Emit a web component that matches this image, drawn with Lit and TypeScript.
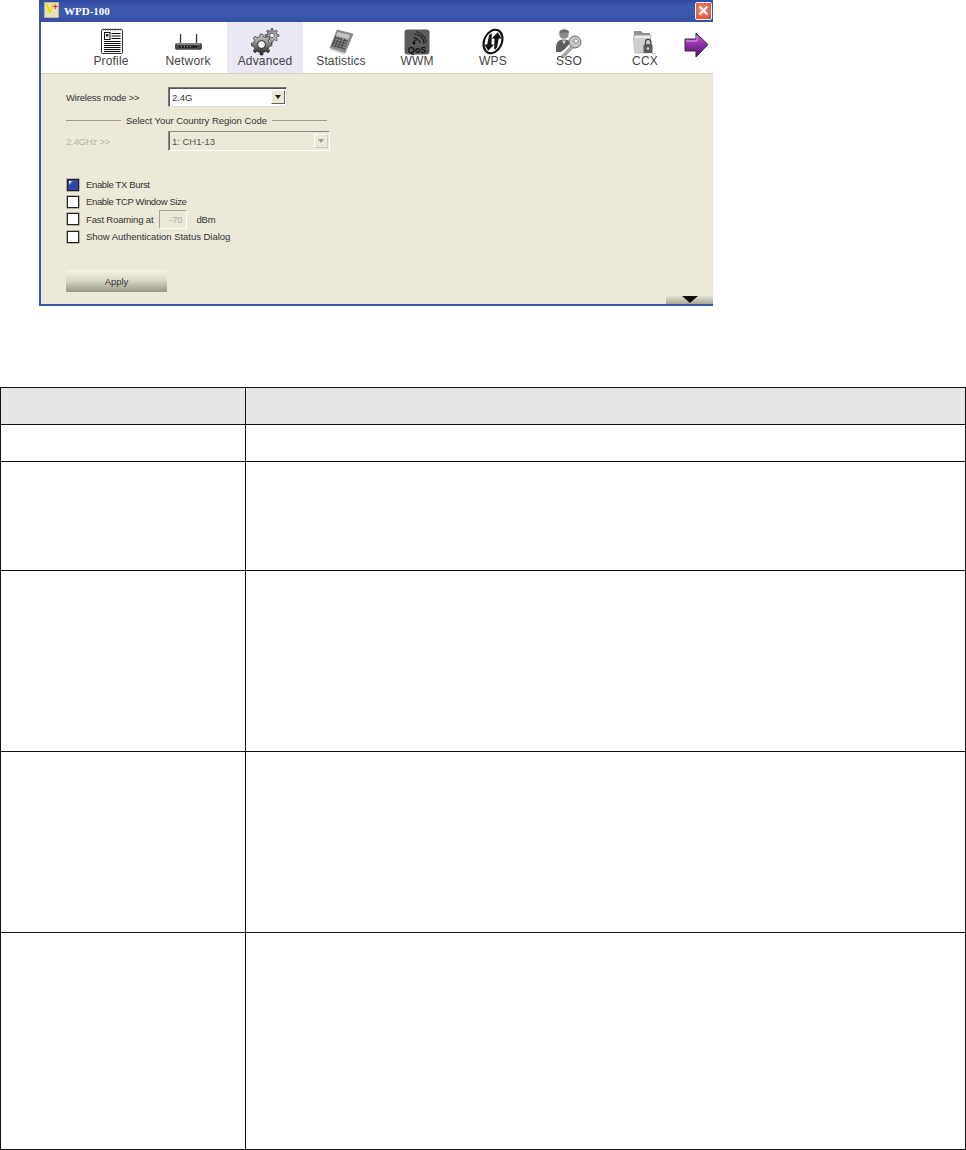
import { LitElement, html, css, svg } from "lit";
import { customElement } from "lit/decorators.js";

function gear(cx: number, cy: number, rOut: number, rIn: number, teeth: number): string {
  const pts: string[] = [];
  const step = (Math.PI * 2) / teeth;
  for (let i = 0; i < teeth; i++) {
    const a = i * step;
    const corners: [number, number][] = [
      [rIn, a - step * 0.5],
      [rIn, a - step * 0.27],
      [rOut, a - step * 0.15],
      [rOut, a + step * 0.15],
      [rIn, a + step * 0.27],
    ];
    for (const [r, t] of corners) {
      pts.push(`${(cx + r * Math.cos(t)).toFixed(2)} ${(cy + r * Math.sin(t)).toFixed(2)}`);
    }
  }
  return "M" + pts.join("L") + "Z";
}

const icons: Record<string, unknown> = {
  profile: svg`<svg class="ic" width="24" height="27" viewBox="0 0 24 27" style="margin-top:6px">
    <rect x="2.500" y="1.500" width="21" height="24" rx="1" fill="#f6f6f6" stroke="#333" stroke-width="1"/>
    <path d="M4 .5v2M6.500 .5v2M9 .5v2M11.500 .5v2M14 .5v2M16.500 .5v2M19 .5v2M21.500 .5v2" stroke="#555" stroke-width="1"/>
    <rect x="5.500" y="4.500" width="5.500" height="7" fill="#fff" stroke="#111" stroke-width="1"/>
    <path d="M7 6h2.500v2.500H7z" fill="#222"/>
    <path d="M12.500 5.500h9M12.500 8h9M12.500 10.500h9M5 13.500h16.500M5 15.500h16.500M5 17.500h16.500M5 19.500h16.500M5 21.500h16.500M5 23.500h16.500" stroke="#111" stroke-width="1"/>
  </svg>`,
  network: svg`<svg class="ic" width="28" height="18" viewBox="0 0 28 18" style="margin-top:12px">
    <path d="M6.500 0v10M22.500 0v10" stroke="#333" stroke-width="1.300"/>
    <rect x="1" y="9" width="27" height="7" rx="2" fill="#4a4a4a"/>
    <path d="M3 10h23" stroke="#aaa" stroke-width="1.200"/>
    <path d="M5 12.700h18" stroke="#1a1a1a" stroke-width="2"/>
    <path d="M7 12.700h1M10 12.700h1M13 12.700h1M16 12.700h1" stroke="#bbb" stroke-width="1"/>
    <path d="M4 15.500h21" stroke="#777" stroke-width="1"/>
  </svg>`,
  advanced: svg`<svg class="ic" width="29" height="29" viewBox="0 0 29 29" style="margin-top:6px">
    <defs>
      <linearGradient id="g" x1="0" y1="0" x2="0" y2="1"><stop offset="0" stop-color="#d4d4d4"/><stop offset=".45" stop-color="#8a8a8a"/><stop offset="1" stop-color="#1c1c1c"/></linearGradient>
      <linearGradient id="g2" x1="0" y1="0" x2="1" y2="1"><stop offset="0" stop-color="#7a7a7a"/><stop offset="1" stop-color="#cfcfcf"/></linearGradient>
    </defs>
    <path d="${gear(21, 7.500, 7, 5, 8)}" fill="url(#g2)" stroke="#333" stroke-width=".7"/>
    <circle cx="21" cy="7.500" r="2.300" fill="#f2f0fa" stroke="#555" stroke-width=".8"/>
    <path d="${gear(10.500, 16.500, 10.500, 8, 8)}" fill="url(#g)" stroke="#222" stroke-width=".7"/>
    <circle cx="10.500" cy="16.500" r="4" fill="#f2f0fa" stroke="#222" stroke-width="1"/>
  </svg>`,
  statistics: svg`<svg class="ic" width="25" height="26" viewBox="0 0 25 26" style="margin-top:7px">
    <path d="M8 1 24 5 16 24 1 19z" fill="#8a8a8a" stroke="#777" stroke-width=".6"/>
    <path d="M8.500 3 21 6l-1.800 4.500L7 7z" fill="#c4c4c4"/>
    <path d="M6 9l13 3.200M5 11.500l13 3.200M4 14l13 3.200M3 16.500l13 3.200M7 7l-4 10M10 8l-4 10M13 8.700l-4 10M16 9.500l-4 10" stroke="#4a4a4a" stroke-width="1.100"/>
    <path d="M1 19l15 5-1 1.500L1 21z" fill="#d4d4d4"/>
  </svg>`,
  www: svg`<svg class="ic" width="26" height="26" viewBox="0 0 26 26" style="margin-top:7px">
    <rect x=".5" y=".5" width="25" height="25" rx="3" fill="#5c5c5c"/>
    <path d="M10 14a2.500 2.500 0 0 1 3-3M9 9a6 6 0 0 1 7 5M10 5a9.500 9.500 0 0 1 10 10M12 2.500a13 13 0 0 1 10.500 11" fill="none" stroke="#222" stroke-width="1.200"/>
    <circle cx="10" cy="14" r="1.400" fill="#111"/>
    <text x="13" y="24" text-anchor="middle" font-family="Liberation Sans, sans-serif" font-weight="700" font-size="9" fill="#0c0c0c">QoS</text>
  </svg>`,
  wps: svg`<svg class="ic" width="26" height="27" viewBox="0 0 26 27" style="margin-top:6px">
    <ellipse cx="13" cy="13.500" rx="8.800" ry="12.200" transform="rotate(24 13 13.500)" fill="#fff" stroke="#111" stroke-width="2.200"/>
    <path d="M9 7.500c.8-1.200 1.700-1.800 2.800-2.100l-.3 11.100h2.700L8.300 22.800 4.400 16.500h2.800z" fill="#111"/>
    <path d="M17 19.500c-.8 1.200-1.700 1.800-2.800 2.100l.3-11.100h-2.700L17.700 4.200l3.900 6.300h-2.800z" fill="#111"/>
  </svg>`,
  sso: svg`<svg class="ic" width="26" height="30" viewBox="0 0 26 30" style="margin-top:6px">
    <circle cx="8" cy="6" r="4.800" fill="#8a8a8a"/>
    <path d="M3 4.500C4 1 12 0 13.500 4.500z" fill="#6a6a6a"/>
    <path d="M0 20c0-6 3-8.500 8-8.500 3 0 5.500 1 6.500 3L9 21 5 24H0z" fill="#5f5f5f"/>
    <path d="M6 12.500l2 4 2-4z" fill="#d0d0d0"/>
    <circle cx="19" cy="14" r="6" fill="#c8c8c8" stroke="#666"/>
    <circle cx="20" cy="13" r="2.200" fill="#f0f0f0" stroke="#777" stroke-width=".8"/>
    <path d="M15 18 5.500 28l2 1.500L17.500 19.500z" fill="#b0b0b0" stroke="#666" stroke-width=".6"/>
  </svg>`,
  ccx: svg`<svg class="ic" width="24" height="26" viewBox="0 0 24 26" style="margin-top:8px">
    <path d="M1 1h7l2 2h7v4H1z" fill="#8f8f8f"/>
    <path d="M0 5l2 18h14l2-18z" fill="#cfcfcf" stroke="#a5a5a5" stroke-width=".6"/>
    <path d="M2 6h15v2H2z" fill="#ececec"/>
    <path d="M12.500 12a2.700 2.700 0 0 1 5.400 0v3h-5.400z" fill="none" stroke="#444" stroke-width="1.300"/>
    <rect x="10.500" y="14.500" width="9" height="8.500" rx="1" fill="#5a5a5a"/>
    <circle cx="15" cy="18.500" r="1.300" fill="#ddd"/>
    <path d="M19 23.500h1M21 23.500h1M20 25h1M22 25h1" stroke="#aaa"/>
  </svg>`,
};

const tabs: [string, string, number][] = [
  ["Profile", "profile", 76],
  ["Network", "network", 78],
  ["Advanced", "advanced", 76],
  ["Statistics", "statistics", 76],
  ["WWM", "www", 76],
  ["WPS", "wps", 76],
  ["SSO", "sso", 76],
  ["CCX", "ccx", 76],
];

@customElement("app-root")
export class AppRoot extends LitElement {
  static styles = css`
    :host { display: block; width: 966px; height: 1150px; background: #fff; font-family: "Liberation Sans", Arial, sans-serif; overflow: hidden; }
    .win { margin-left: 39px; width: 674px; height: 306px; display: flex; flex-direction: column; box-sizing: border-box; background: #3c55ad; padding: 0 0 2px 2px; }
    .title { height: 22px; flex: none; display: flex; align-items: center; margin: 0 0 0 -2px; padding: 0 1px 0 5px; gap: 5px;
      background: linear-gradient(#2f4aa3 0, #3d5aae 35%, #3a57ab 70%, #3350a5 100%); }
    .logo { width: 13px; height: 14px; background: #e8e2b8; border: 1px solid #b9b391; margin-top: -2px; flex: none; position: relative; font: 700 9px/13px "Liberation Sans", sans-serif; }
    .logo b { color: #e6e000; font-size: 12px; line-height: 13px; position: absolute; left: 1px; top: 0; }
    .logo i { color: #e0261c; font-style: normal; position: absolute; right: 0; top: -2px; }
    .tname { color: #fff; font: 700 11px "Liberation Serif", serif; flex: 1; margin-top: -1px; }
    .close { width: 17px; height: 18px; margin: 0 0 1px; box-sizing: border-box; border: 1px solid #f4f4f4; border-radius: 2px; background: radial-gradient(circle at 40% 40%, #ee8a70, #d8482e); display: grid; place-items: center; }
    .toolbar { height: 52px; flex: none; background: #fff; display: flex; padding-left: 32px; box-sizing: border-box; border-bottom: 1px solid #d6d3bd; }
    .tab { height: 51px; flex: none; display: flex; flex-direction: column; align-items: center; position: relative; }
    .tab.on { background: #ebe8f4; }
    .tab span { position: absolute; top: 32px; left: 0; right: 0; text-align: center; font-size: 12px; line-height: 14px; color: #444; letter-spacing: .15px; }
    .arrow { margin: 10px 0 0 1px; }
    .panel { flex: 1; background: #ece9d8; position: relative; padding: 13px 0 0 25px; font-size: 9.500px; color: #333; letter-spacing: -.03px; }
    .row { display: flex; align-items: center; }
    .lbl { width: 102px; flex: none; letter-spacing: -.2px; }
    .dis { color: #b5b3a5; }
    .sel { height: 20px; box-sizing: border-box; border: 1px solid #777; border-right-color: #ddd; border-bottom-color: #ddd; box-shadow: inset 1px 1px 0 #555; background: #fff; display: flex; align-items: center; justify-content: space-between; padding: 0 1px 0 3px; width: 119px; }
    .sel.off { background: #ece9d8; width: 162px; border-color: #888 #fff #fff #888; box-shadow: inset 1px 0 0 #666; color: #555; }
    .btn { width: 14px; height: 14px; background: #ece9d8; border: 1px solid; border-color: #fff #666 #666 #fff; box-sizing: border-box; display: grid; place-items: center; }
    .sel.off .btn { border-color: #fff #ccc #ccc #fff; }
    .tri { width: 0; height: 0; border-left: 3.500px solid transparent; border-right: 3.500px solid transparent; border-top: 4px solid #222; }
    .sel.off .tri { border-top-color: #999; }
    .group { display: flex; align-items: center; width: 261px; gap: 5px; margin: 6px 0 4px; height: 14px; }
    .group i { flex: 1; height: 1px; background: #9c9a8c; }
    .checks { margin: 25px 0 0 1px; display: flex; flex-direction: column; }
    .chk { display: flex; align-items: center; gap: 6px; height: 17px; }
    .chk.tight { letter-spacing: -.36px; }
    .chk.fast { letter-spacing: -.15px; gap: 5px; height: 18px; }
    .box { width: 12px; height: 12px; box-sizing: border-box; border: 1px solid #222; background: #fff; flex: none; box-shadow: 0 0 0 .5px #777; margin-right: 1px; }
    .chk.fast .box { margin-right: 2px; }
    .box.on { background: linear-gradient(135deg, #fff 0 18%, #3049a8 34%, #2b43a0); box-shadow: inset 0 0 0 1px #3049a8, 0 0 0 .5px #777; }
    .num { width: 28px; height: 19px; margin: 0 4px 0 1px; box-sizing: border-box; border: 1px solid; border-color: #a6a498 #fff #fff #a6a498; color: #aaa; text-align: right; padding: 3px 4px 0 0; }
    .chk > .box { align-self: center; }
    .apply { margin-top: 25px; width: 101px; height: 22px; background: linear-gradient(#f4f4e8, #dcdac8 45%, #999884); text-align: center; line-height: 24px; }
    .more { position: absolute; right: 0; bottom: 0; width: 47px; height: 10px; background: linear-gradient(#f2f2e6, #a9a892); display: flex; justify-content: center; padding-top: 2px; box-sizing: border-box; }
    .more i { width: 0; height: 0; border-left: 8px solid transparent; border-right: 8px solid transparent; border-top: 7px solid #111; }
    table { margin-top: 81px; width: 966px; table-layout: fixed; border-collapse: collapse; }
    td { border: 1.500px solid #111; padding: 0; }
    td:first-child { width: 244px; }
    tr.h td { background: #e7e7e7; }
  `;

  render() {
    return html`
      <div class="win">
        <div class="title">
          <div class="logo"><b>V</b><i>+</i></div>
          <div class="tname">WPD-100</div>
          <div class="close">
            <svg width="11" height="11" viewBox="0 0 11 11"><path d="M1.500 1.500l8 8M9.500 1.500l-8 8" stroke="#fff" stroke-width="2.200"/></svg>
          </div>
        </div>
        <div class="toolbar">
          ${tabs.map(([t, k, w]) => html`
            <div class="tab ${k === "advanced" ? "on" : ""}" style="width:${w}px">${icons[k]}<span>${t}</span></div>`)}
          <svg class="arrow" width="25" height="26" viewBox="0 0 25 26">
            <defs><linearGradient id="pa" x1="0" y1="0" x2="0" y2="1"><stop offset="0" stop-color="#c55ad0"/><stop offset=".55" stop-color="#8c2aa0"/><stop offset="1" stop-color="#4a1460"/></linearGradient></defs>
            <path d="M1 7h11V1l12 11.500L12 25v-6H1z" fill="url(#pa)" stroke="#2c2c44" stroke-width="1"/>
            <path d="M2 9h11V4" fill="none" stroke="#e8a0f0" stroke-width="1"/>
          </svg>
        </div>
        <div class="panel">
          <div class="row"><div class="lbl">Wireless mode &gt;&gt;</div>
            <div class="sel"><span>2.4G</span><div class="btn"><div class="tri"></div></div></div></div>
          <div class="group"><i></i><span>Select Your Country Region Code</span><i></i></div>
          <div class="row"><div class="lbl dis">2.4GHz &gt;&gt;</div>
            <div class="sel off"><span>1: CH1-13</span><div class="btn"><div class="tri"></div></div></div></div>
          <div class="checks">
            <div class="chk tight"><div class="box on"></div>Enable TX Burst</div>
            <div class="chk tight"><div class="box"></div>Enable TCP Window Size</div>
            <div class="chk fast"><div class="box"></div>Fast Roaming at<div class="num">-70</div>dBm</div>
            <div class="chk"><div class="box"></div>Show Authentication Status Dialog</div>
          </div>
          <div class="apply">Apply</div>
          <div class="more"><i></i></div>
        </div>
      </div>
      <table>
        <tr class="h" style="height:37px"><td></td><td></td></tr>
        ${[37, 109, 181, 181, 217].map((h) => html`<tr style="height:${h}px"><td></td><td></td></tr>`)}
      </table>`;
  }
}
